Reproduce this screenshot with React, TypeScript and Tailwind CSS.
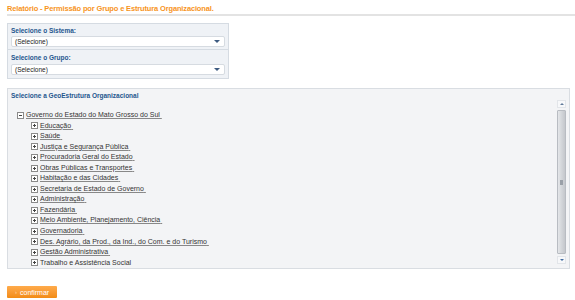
const tree = [
  'Educação',
  'Saúde',
  'Justiça e Segurança Pública',
  'Procuradoria Geral do Estado',
  'Obras Públicas e Transportes',
  'Habitação e das Cidades',
  'Secretaria de Estado de Governo',
  'Administração',
  'Fazendária',
  'Meio Ambiente, Planejamento, Ciência',
  'Governadoria',
  'Des. Agrário, da Prod., da Ind., do Com. e do Turismo',
  'Gestão Administrativa',
  'Trabalho e Assistência Social',
];

const font = { fontFamily: '"Liberation Sans", Arial, sans-serif' };

const TreeBox = ({ open }: { open?: boolean }) => (
  <span className="relative mr-[2px] inline-block h-[7px] w-[7px] shrink-0 border border-[#8a8a8a] bg-white">
    <span className="absolute left-[1px] top-[2px] h-px w-[3px] bg-[#444]" />
    {!open && <span className="absolute left-[2px] top-[1px] h-[3px] w-px bg-[#444]" />}
  </span>
);

const FakeSelect = () => (
  <div className="flex h-[11px] items-center justify-between rounded-[2px] border border-[#d6dbe1] bg-white pl-[3px] pr-[4px] text-[6.5px] text-[#222]">
    <span>(Selecione)</span>
    <span className="h-0 w-0 border-x-[3px] border-t-[3px] border-x-transparent border-t-[#3d5a80]" />
  </div>
);

const Scrollbar = () => (
  <div className="mb-[4px] flex w-[9px] flex-col gap-[2px]">
    <div className="flex h-[8px] items-center justify-center border border-[#e2e5e9] bg-[#f7f8fa]">
      <span className="h-0 w-0 border-x-[2px] border-b-[2px] border-x-transparent border-b-[#607a9a]" />
    </div>
    <div className="flex flex-1 items-center justify-center rounded-[1px] border border-[#b8bcc2] bg-gradient-to-r from-[#e4e6e9] via-[#d3d6da] to-[#c4c7cc]">
      <span className="h-[5px] w-[3px] bg-[#9aa0a8]" />
    </div>
    <div className="flex h-[8px] items-center justify-center border border-[#e2e5e9] bg-[#f7f8fa]">
      <span className="h-0 w-0 border-x-[2px] border-t-[2px] border-x-transparent border-t-[#3f6aa0]" />
    </div>
  </div>
);

export default function App() {
  return (
    <div className="h-[300px] w-[575px] overflow-hidden bg-white pl-[7px] pt-[4px]" style={font}>
      <h1 className="border-b-2 border-[#e3e3e3] pb-[1px] text-[7.5px] font-bold leading-[9px] tracking-[-0.15px] text-[#f7941d]">
        Relatório - Permissão por Grupo e Estrutura Organizacional.
      </h1>

      <div className="mt-[7px] w-[222px] border border-[#d5dbe2] bg-[#eff2f6] px-[3px] pb-[3px] pt-[3px]">
        <div className="text-[6.5px] font-bold leading-[8px] text-[#24568e]">Selecione o Sistema:</div>
        <div className="mt-[1px]">
          <FakeSelect />
        </div>
        <div className="-mx-[3px] mt-[2px] border-t border-[#d5dbe2]" />
        <div className="mt-[4px] text-[6.5px] font-bold leading-[8px] text-[#24568e]">Selecione o Grupo:</div>
        <div className="mt-[2px]">
          <FakeSelect />
        </div>
      </div>

      <div className="mt-[9px] flex h-[181px] w-[563px] flex-col border border-[#d9dde2] bg-[#f3f4f6] px-[3px] pt-[3px]">
        <div className="text-[6.5px] font-bold leading-[8px] text-[#24568e]">
          Selecione a GeoEstrutura Organizacional
        </div>
        <div className="flex min-h-0 flex-1">
          <div className="flex-1 overflow-hidden pl-[6px] pt-[10px] text-[7px] leading-[10.55px] text-[#333]">
            <div className="flex items-center">
              <TreeBox open />
              <span className="underline decoration-[#888]">Governo do Estado do Mato Grosso do Sul&nbsp;</span>
            </div>
            <ul className="pl-[14px]">
              {tree.map((item, i) => (
                <li key={item} className="flex items-center">
                  <TreeBox />
                  <span className={i < tree.length - 1 ? 'underline decoration-[#888]' : ''}>{item}&nbsp;</span>
                </li>
              ))}
            </ul>
          </div>
          <Scrollbar />
        </div>
      </div>

      <button className="mt-[17px] flex h-[12px] w-[50px] items-center gap-[3px] rounded-[1px] bg-gradient-to-b from-[#ffab4a] to-[#f28b12] pl-[8px] text-[7px] leading-none text-white">
        <span className="text-[6px] text-[#ffd9a8]">›</span>
        confirmar
      </button>
    </div>
  );
}
